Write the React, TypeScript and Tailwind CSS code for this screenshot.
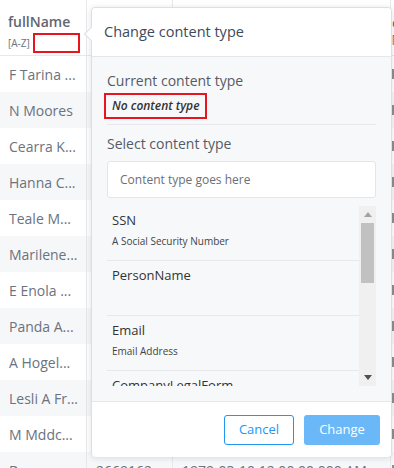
import React from 'react';

const names = [
  'F Tarina ...',
  'N Moores',
  'Cearra K...',
  'Hanna C...',
  'Teale M...',
  'Marilene...',
  'E Enola ...',
  'Panda A...',
  'A Hogel...',
  'Lesli A Fr...',
  'M Mddc...',
  'Basma...',
];

const contentTypes = [
  { name: 'SSN', desc: 'A Social Security Number' },
  { name: 'PersonName', desc: '' },
  { name: 'Email', desc: 'Email Address' },
  { name: 'CompanyLegalForm', desc: '' },
];

const Table: React.FC = () => {
  return (
    <div className="w-[394px] overflow-hidden">
      <div className="flex h-[56px] border-b border-[#e6e8ec] bg-white">
        <div className="flex w-[87px] shrink-0 flex-col border-r border-[#e6e8ec] pl-2 pt-[12px]">
          <span className="text-[14px] font-semibold leading-[20px] text-[#5f6672]">fullName</span>
          <div className="mt-[1px] flex items-center">
            <span className="text-[10px] leading-[14px] text-[#6b7280]">[A-Z]</span>
            <span className="ml-[3px] h-[20px] w-[47px] border-2 border-[#e8141f]" />
          </div>
        </div>
        <div className="w-[86px] shrink-0 border-r border-[#e6e8ec]" />
        <div className="w-[218px] shrink-0 border-r border-[#e6e8ec]" />
        <div className="flex flex-col pl-[1px] pt-[12px] text-[#5b6270]">
          <span className="text-[15px] leading-[20px]">c</span>
          <span className="text-[10px] leading-[14px]">[</span>
        </div>
      </div>
      {names.map((n, i) => (
        <div
          key={n}
          className={`flex h-[36px] items-center text-[14px] text-[#6b7280] ${i % 2 === 1 ? 'bg-[#f6f7f9]' : 'bg-white'}`}
        >
          <div className="flex h-full w-[87px] shrink-0 items-center border-r border-[#e6e8ec] pl-[9px] whitespace-nowrap">{n}</div>
          <div className="flex h-full w-[86px] shrink-0 items-center border-r border-[#e6e8ec] pl-[9px]">2669162</div>
          <div className="flex h-full w-[218px] shrink-0 items-center border-r border-[#e6e8ec] pl-[9px] whitespace-nowrap">
            1979-03-10 12:00:00:000 AM
          </div>
          <div className="flex h-full items-center pl-[1px]">
            <span className="h-[10px] w-[3px] bg-[#8a8f98]" />
          </div>
        </div>
      ))}
    </div>
  );
};

const Popover: React.FC = () => {
  return (
    <div className="absolute left-[91px] top-[7px] flex h-[450px] w-[301px] flex-col rounded-[4px] border border-[#dcdfe4] bg-white shadow-[0_1px_6px_rgba(0,0,0,0.12)]">
      <div className="absolute left-[-6px] top-[21px] h-[10px] w-[10px] rotate-45 border-b border-l border-[#dcdfe4] bg-white" />
      <div className="flex h-[49px] shrink-0 items-center rounded-t-[4px] border-b border-[#e3e7ee] bg-white pl-[12px] text-[14.5px] text-[#3d4a5c]">
        Change content type
      </div>
      <div className="flex flex-1 flex-col bg-[#f7f8fa] px-[15px] pt-[14px]">
        <div className="text-[14px] leading-[20px] text-[#555b66]">Current content type</div>
        <div className="mt-[2px] flex">
          <span className="ml-[-3px] flex h-[26px] items-center border-2 border-[#e8141f] px-[6px] text-[12px] font-semibold italic text-[#333]">
            No content type
          </span>
        </div>
        <div className="mt-[5px] h-px bg-[#e6e8ec]" />
        <div className="mt-[9px] text-[14px] leading-[20px] text-[#555b66]">Select content type</div>
        <div className="mt-[7px] flex h-[37px] items-center rounded-[3px] border border-[#e3e6ea] bg-white pl-[12px] text-[12px] text-[#6b6f76]">
          Content type goes here
        </div>
        <div className="mt-[8px] flex h-[180px] overflow-hidden">
          <div className="flex-1 overflow-hidden">
            {contentTypes.map((c) => (
              <div key={c.name} className="h-[55px] border-b border-[#e6e8ec] pl-[5px] pt-[4px]">
                <div className="text-[13px] leading-[20px] text-[#333]">{c.name}</div>
                <div className="mt-[4px] text-[10px] leading-[14px] text-[#444]">{c.desc}</div>
              </div>
            ))}
          </div>
          <div className="flex w-[17px] shrink-0 flex-col items-center bg-[#f0f0f0]">
            <svg width="8" height="5" viewBox="0 0 8 5" className="mt-[6px]">
              <path d="M0 5 L4 0 L8 5 Z" fill="#a3a3a3" />
            </svg>
            <div className="mt-[6px] h-[60px] w-[13px] bg-[#c1c1c1]" />
            <div className="flex-1" />
            <svg width="8" height="5" viewBox="0 0 8 5" className="mb-[6px]">
              <path d="M0 0 L8 0 L4 5 Z" fill="#505050" />
            </svg>
          </div>
        </div>
        <div className="h-[15px]" />
      </div>
      <div className="flex h-[56px] shrink-0 items-center justify-end gap-[10px] rounded-b-[4px] border-t border-[#e3e7ee] bg-white pr-[11px]">
        <button className="h-[30px] w-[70px] rounded-[3px] border border-[#2196f3] bg-white text-[13px] text-[#2196f3]">
          Cancel
        </button>
        <button className="h-[30px] w-[76px] rounded-[3px] bg-[#6ab8f7] text-[13px] text-white">Change</button>
      </div>
    </div>
  );
};

const App: React.FC = () => {
  return (
    <div className="relative h-[468px] w-[394px] overflow-hidden bg-white font-['Open_Sans',sans-serif]">
      <Table />
      <Popover />
    </div>
  );
};

export default App;
